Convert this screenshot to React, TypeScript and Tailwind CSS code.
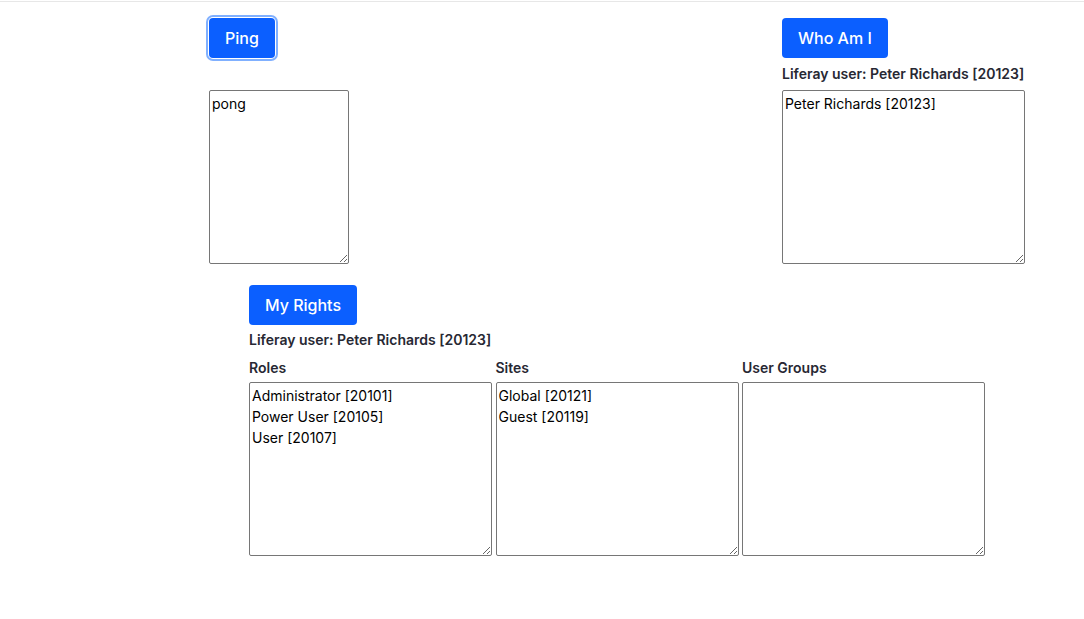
const Btn = ({ label, focused }: { label: string; focused?: boolean }) => (
    <button
        className={
            "h-10 rounded-[4px] bg-[#0b5fff] px-4 text-base font-medium text-white " +
            (focused ? "ring-2 ring-[#80b0ff] ring-offset-1" : "")
        }
    >
        {label}
    </button>
);

const Box = ({ value, w }: { value: string; w: string }) => (
    <textarea
        readOnly
        defaultValue={value}
        className={
            "block h-[174px] rounded-[2px] border border-[#767676] p-[2px] text-[14px] leading-[21px] text-black outline-none " +
            w
        }
        style={{ fontFamily: "Inter, 'Liberation Sans', sans-serif" }}
    />
);

const Label = ({ text }: { text: string }) => (
    <div className="text-[14px] font-semibold leading-5 text-[#272833]">{text}</div>
);

export default function App() {
    return (
        <div
            className="min-h-[619px] bg-white"
            style={{ fontFamily: "Inter, 'Liberation Sans', sans-serif" }}
        >
            <div className="h-[2px] border-b border-[#e7e7e7]" />
            <div className="ml-[209px] mt-4 flex w-[816px] justify-between">
                <div>
                    <Btn label="Ping" focused />
                    <div className="mt-8">
                        <Box value="pong" w="w-[140px]" />
                    </div>
                </div>
                <div>
                    <Btn label="Who Am I" />
                    <div className="mt-[6px]">
                        <Label text="Liferay user: Peter Richards [20123]" />
                    </div>
                    <div className="mt-[6px]">
                        <Box value="Peter Richards [20123]" w="w-[243px]" />
                    </div>
                </div>
            </div>
            <div className="ml-[249px] mt-[21px]">
                <Btn label="My Rights" />
                <div className="mt-[5px]">
                    <Label text="Liferay user: Peter Richards [20123]" />
                </div>
                <div className="mt-2 flex gap-[3.5px]">
                    <div>
                        <Label text="Roles" />
                        <div className="mt-1">
                            <Box
                                value={"Administrator [20101]\nPower User [20105]\nUser [20107]"}
                                w="w-[243px]"
                            />
                        </div>
                    </div>
                    <div>
                        <Label text="Sites" />
                        <div className="mt-1">
                            <Box value={"Global [20121]\nGuest [20119]"} w="w-[243px]" />
                        </div>
                    </div>
                    <div>
                        <Label text="User Groups" />
                        <div className="mt-1">
                            <Box value="" w="w-[243px]" />
                        </div>
                    </div>
                </div>
            </div>
        </div>
    );
}
